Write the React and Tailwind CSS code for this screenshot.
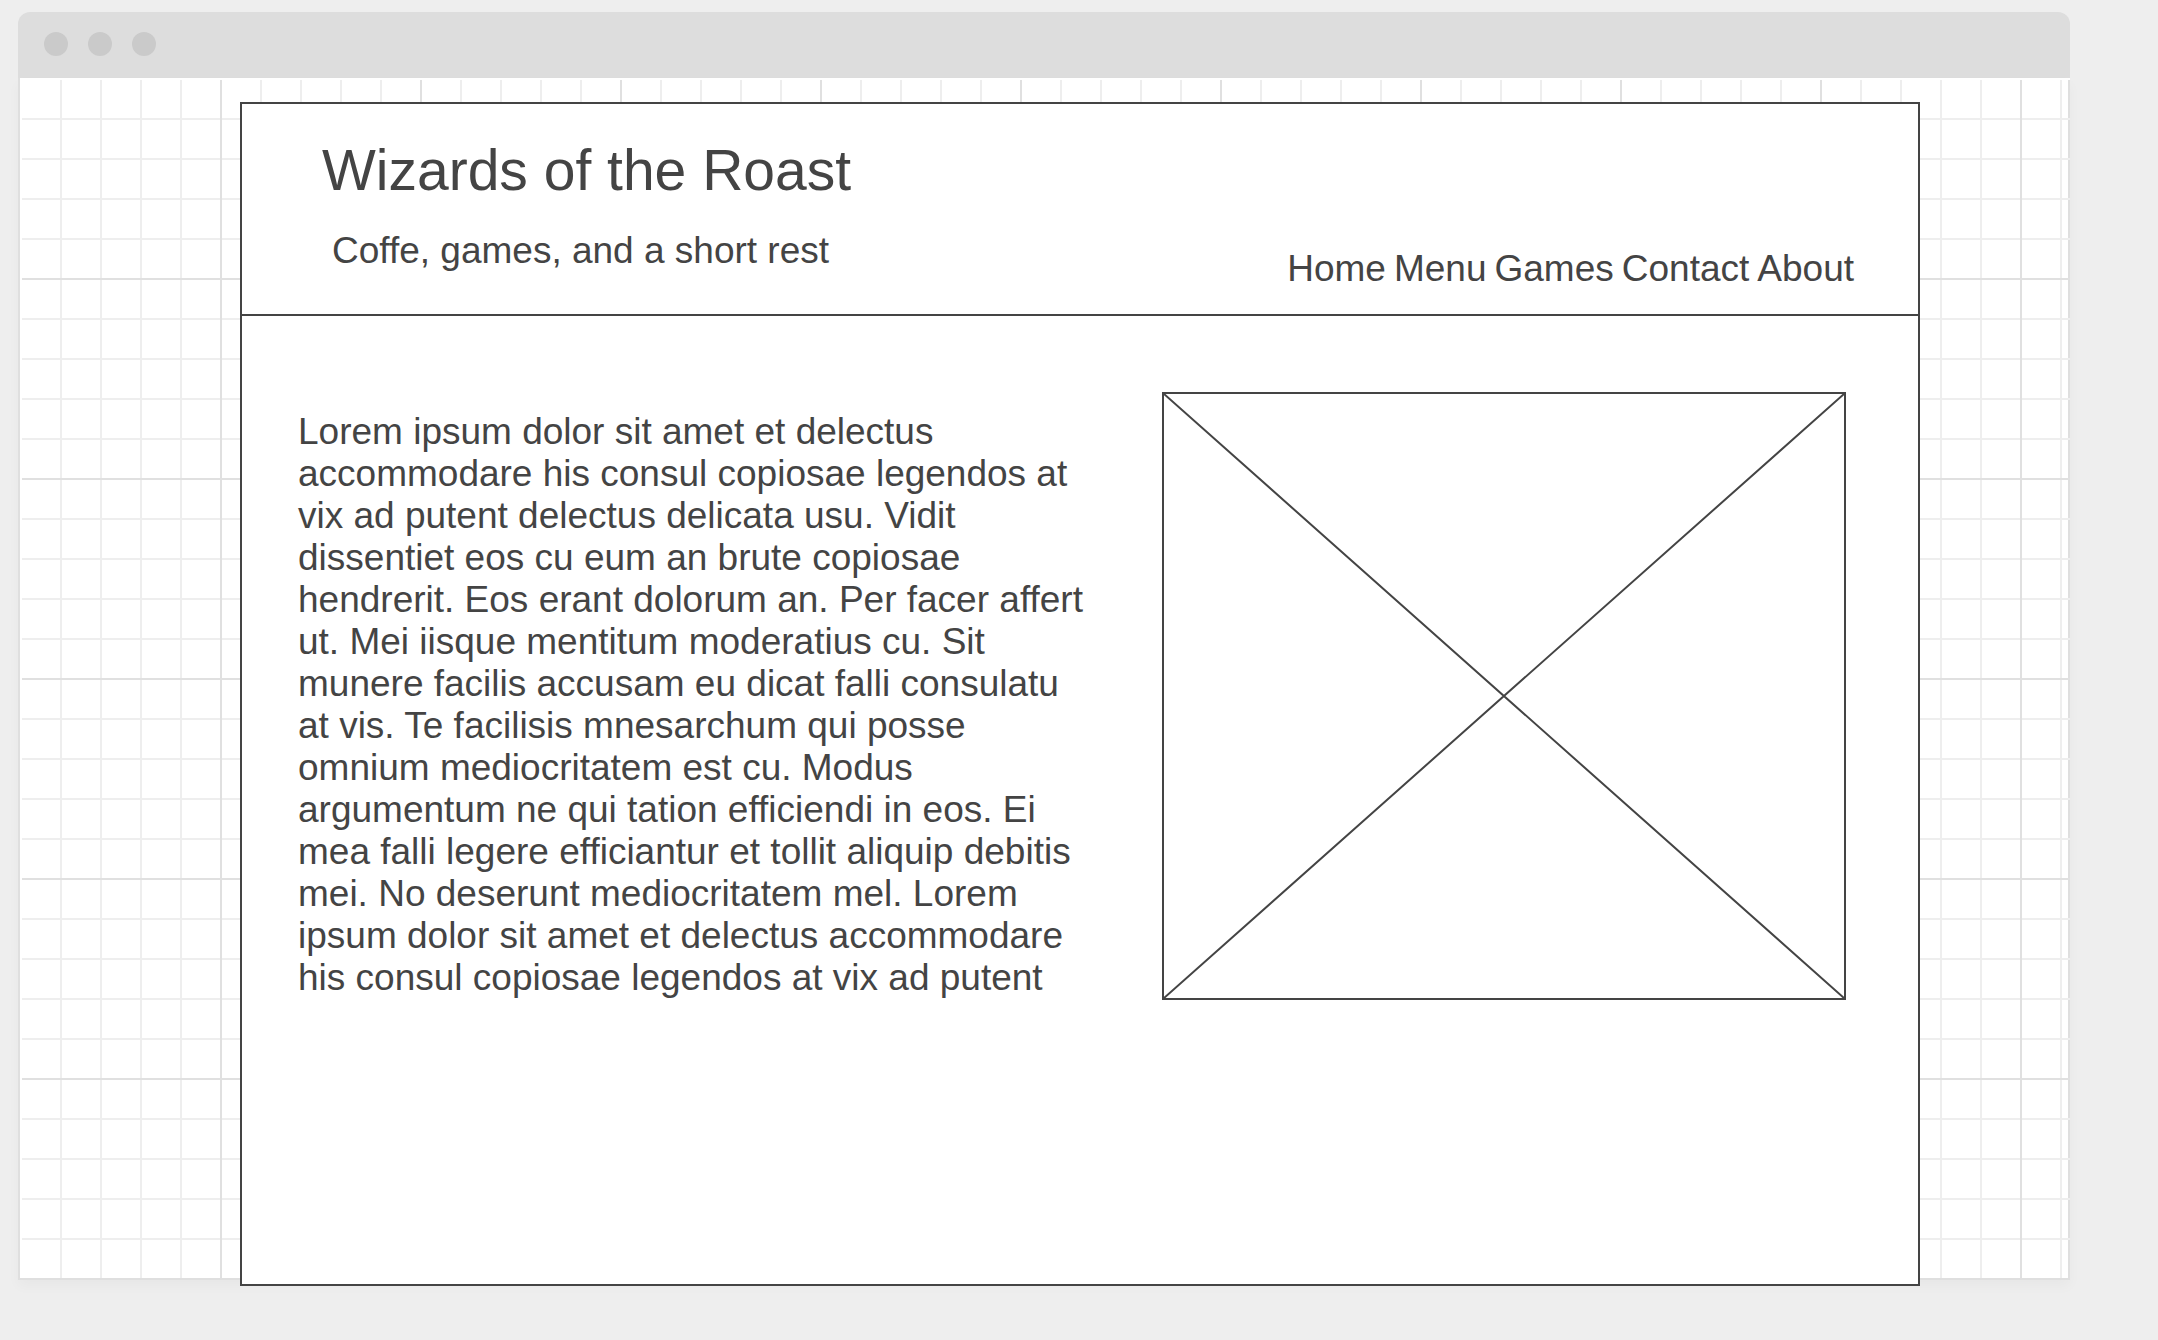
const LINES = [
  "Lorem ipsum dolor sit amet et delectus",
  "accommodare his consul copiosae legendos at",
  "vix ad putent delectus delicata usu. Vidit",
  "dissentiet eos cu eum an brute copiosae",
  "hendrerit. Eos erant dolorum an. Per facer affert",
  "ut. Mei iisque mentitum moderatius cu. Sit",
  "munere facilis accusam eu dicat falli consulatu",
  "at vis. Te facilisis mnesarchum qui posse",
  "omnium mediocritatem est cu. Modus",
  "argumentum ne qui tation efficiendi in eos. Ei",
  "mea falli legere efficiantur et tollit aliquip debitis",
  "mei. No deserunt mediocritatem mel. Lorem",
  "ipsum dolor sit amet et delectus accommodare",
  "his consul copiosae legendos at vix ad putent",
];

const LINKS = ["Home", "Menu", "Games", "Contact", "About"];

function TitleBar() {
  return (
    <div className="flex h-[66px] items-center gap-5 rounded-t-xl bg-[#dddddd] px-[26px] pb-0.5">
      <span className="size-6 rounded-full bg-[#cacaca]" />
      <span className="size-6 rounded-full bg-[#cacaca]" />
      <span className="size-6 rounded-full bg-[#cacaca]" />
    </div>
  );
}

function SiteHeader() {
  return (
    <header className="flex items-end justify-between border-b-2 border-[#444444] pt-[34px] pr-16 pb-6 pl-20">
      <div className="pb-[18px]">
        <h1 className="text-[57px] leading-16">Wizards of the Roast</h1>
        <p className="mt-7 pl-2.5 text-[37px] leading-[42px]">Coffe, games, and a short rest</p>
      </div>
      <nav className="flex gap-2 text-[37px] leading-[42px]">
        {LINKS.map((label) => (
          <a key={label} href={"#" + label.toLowerCase()}>
            {label}
          </a>
        ))}
      </nav>
    </header>
  );
}

function ImagePlaceholder() {
  return (
    <div role="img" aria-label="Image placeholder" className="aspect-[684/608] border-2 border-[#444444]">
      <svg className="block size-full" viewBox="0 0 680 604" preserveAspectRatio="none" stroke="#444444" strokeWidth="2">
        <path d="M0 0 680 604M680 0 0 604" fill="none" />
      </svg>
    </div>
  );
}

export default function App() {
  return (
    <div className="min-h-screen bg-[#eeeeee] pt-3 pr-[88px] pb-[60px] pl-[18px] font-['Liberation_Sans',Arial,sans-serif] text-[#444444]">
      <TitleBar />
      <div className="border-2 border-t-0 border-[#dfdfdf] bg-white shadow-[0_6px_12px_rgba(0,0,0,0.03)]">
        <div className="-mr-0.5 flow-root border-t-2 border-l-2 border-white bg-[linear-gradient(to_right,#e0e0e0_2px,transparent_2px),linear-gradient(to_bottom,#e0e0e0_2px,transparent_2px),linear-gradient(to_right,#eeeeee_2px,transparent_2px),linear-gradient(to_bottom,#eeeeee_2px,transparent_2px)] bg-[size:200px_200px,200px_200px,40px_40px,40px_40px] bg-[position:198px_0,0_198px,38px_0,0_38px] bg-origin-padding pt-[22px] pr-[150px] pl-[218px] bg-clip-padding">
          <main className="-mb-2 min-h-[1184px] border-2 border-[#444444] bg-white">
            <SiteHeader />
            <section className="grid grid-cols-[920fr_684fr] items-start pt-[76px] pr-[72px]">
              <p className="pt-[19px] pl-14 text-[37px] leading-[42px] whitespace-nowrap">
                {LINES.map((line) => (
                  <span key={line} className="block">
                    {line}
                  </span>
                ))}
              </p>
              <ImagePlaceholder />
            </section>
          </main>
        </div>
      </div>
    </div>
  );
}
